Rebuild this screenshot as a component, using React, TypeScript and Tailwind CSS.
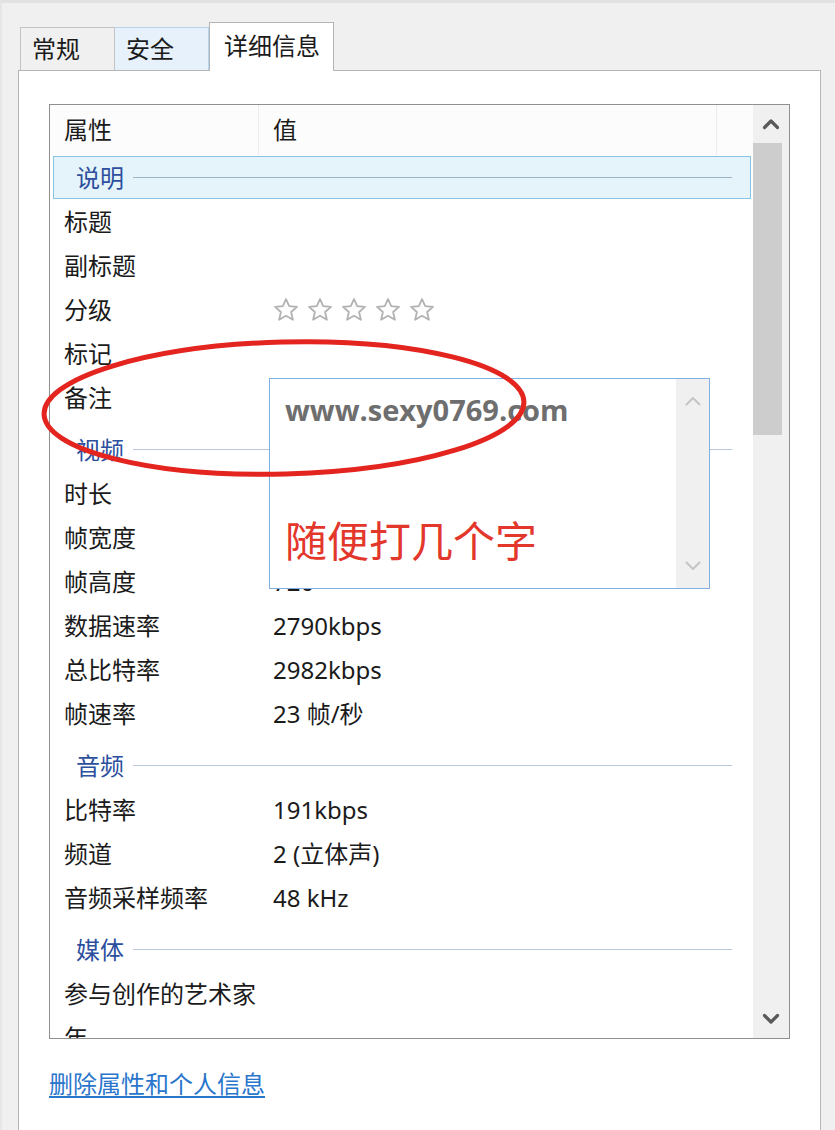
import React from "react";

type Row =
  | { kind: "group"; label: string; selected?: boolean; first?: boolean }
  | { kind: "prop"; name: string; value?: string; stars?: boolean };

const rows: Row[] = [
  { kind: "group", label: "说明", selected: true, first: true },
  { kind: "prop", name: "标题" },
  { kind: "prop", name: "副标题" },
  { kind: "prop", name: "分级", stars: true },
  { kind: "prop", name: "标记" },
  { kind: "prop", name: "备注" },
  { kind: "group", label: "视频" },
  { kind: "prop", name: "时长" },
  { kind: "prop", name: "帧宽度" },
  { kind: "prop", name: "帧高度", value: "720" },
  { kind: "prop", name: "数据速率", value: "2790kbps" },
  { kind: "prop", name: "总比特率", value: "2982kbps" },
  { kind: "prop", name: "帧速率", value: "23 帧/秒" },
  { kind: "group", label: "音频" },
  { kind: "prop", name: "比特率", value: "191kbps" },
  { kind: "prop", name: "频道", value: "2 (立体声)" },
  { kind: "prop", name: "音频采样频率", value: "48 kHz" },
  { kind: "group", label: "媒体" },
  { kind: "prop", name: "参与创作的艺术家" },
  { kind: "prop", name: "年" },
];

const Star = () => (
  <svg width="26" height="26" viewBox="0 0 26 26">
    <path
      d="M13 2 L16.2 9.1 L24 9.9 L18.1 15 L19.9 22.8 L13 18.8 L6.1 22.8 L7.9 15 L2 9.9 L9.8 9.1 Z"
      fill="#fdfdfd"
      stroke="#b2b2b2"
      strokeWidth="1.8"
      strokeLinejoin="round"
    />
  </svg>
);

const Chevron = ({ up, color, w = 3 }: { up?: boolean; color: string; w?: number }) => (
  <svg width="18" height="12" viewBox="0 0 18 12">
    <path
      d={up ? "M2.5 9.5 L9 3 L15.5 9.5" : "M2.5 2.5 L9 9 L15.5 2.5"}
      fill="none"
      stroke={color}
      strokeWidth={w}
      strokeLinecap="round"
      strokeLinejoin="round"
    />
  </svg>
);

const GroupRow = ({ label, selected, first }: { label: string; selected?: boolean; first?: boolean }) => (
  <div className={"shrink-0 " + (first ? "h-[45px] pt-[1px]" : "h-[52px] pt-[8px]")}>
    <div
      className={
        "ml-[3px] mr-[2px] h-[43px] border flex items-center pl-[22px] pr-[18px] " +
        (selected ? "border-[#86c6e4] bg-[#e5f3fb]" : "border-transparent")
      }
    >
      <span className="text-[#2c4f9e]">{label}</span>
      <div className={"flex-1 h-px ml-[9px] " + (selected ? "bg-[#9db3c6]" : "bg-[#b9c7dc]")} />
    </div>
  </div>
);

const PropRow = ({ name, value, stars }: { name: string; value?: string; stars?: boolean }) => (
  <div className="shrink-0 h-[44px] flex items-center">
    <div className="w-[209px] pl-[14px] whitespace-nowrap">{name}</div>
    <div className="pl-[14px] whitespace-nowrap flex items-center gap-[8px]">
      {stars ? (
        <>
          <Star />
          <Star />
          <Star />
          <Star />
          <Star />
        </>
      ) : (
        value
      )}
    </div>
  </div>
);

export default function App() {
  return (
    <div className="relative w-[835px] h-[1130px] overflow-hidden bg-[#f0f0f0] border-t-[3px] border-t-[#e2e2e2] border-l-[2px] border-l-[#e6e6e6] font-['Noto_Sans','Noto_Sans_CJK_SC',sans-serif] text-[24px] leading-none text-[#1b1b1b]">
      {/* tabs */}
      <div className="pt-[19px] pl-[18px] flex items-end h-[67px]">
        <div className="w-[95px] h-[43px] border border-b-0 border-[#c4c4c4] bg-[#f0f0f0] flex items-center pl-[11px]">
          常规
        </div>
        <div className="w-[94px] h-[43px] border border-l-0 border-b-0 border-[#b4d3ee] bg-[#e6f1fb] flex items-center pl-[11px]">
          安全
        </div>
        <div className="relative z-10 w-[125px] h-[49px] -mb-[1px] border border-b-0 border-[#b5b5b5] bg-white flex items-center pl-[14px] pb-[2px]">
          详细信息
        </div>
      </div>

      {/* tab page */}
      <div className="ml-[16px] w-[803px] h-[1100px] border border-[#b5b5b5] bg-white pt-[33px] pl-[30px]">
        <div className="w-[741px] h-[935px] border border-[#8f8f8f] flex overflow-hidden bg-white">
          <div className="w-[703px] flex flex-col">
            <div className="h-[50px] flex items-center shrink-0 bg-[#fcfcfc]">
              <div className="w-[209px] h-full pl-[14px] flex items-center border-r border-[#ececec]">属性</div>
              <div className="w-[458px] h-full pl-[14px] flex items-center border-r border-[#ececec]">值</div>
              <div className="flex-1" />
            </div>
            {rows.map((r, i) =>
              r.kind === "group" ? (
                <GroupRow key={i} label={r.label} selected={r.selected} first={r.first} />
              ) : (
                <PropRow key={i} name={r.name} value={r.value} stars={r.stars} />
              )
            )}
          </div>
          {/* scrollbar */}
          <div className="flex-1 bg-[#f0f0f0] flex flex-col">
            <div className="h-[38px] shrink-0 flex items-center justify-center">
              <Chevron up color="#5a5a5a" w={3.2} />
            </div>
            <div className="w-[29px] h-[292px] shrink-0 bg-[#cdcdcd]" />
            <div className="flex-1" />
            <div className="h-[38px] shrink-0 flex items-center justify-center">
              <Chevron color="#5a5a5a" w={3.2} />
            </div>
          </div>
        </div>

        <div className="mt-[33px] text-[#2a76cc] underline underline-offset-[3px] w-fit">删除属性和个人信息</div>
      </div>

      {/* inline editor over the list */}
      <div className="absolute left-[267px] top-[375px] w-[441px] h-[211px] border-[1.5px] border-[#7fb0e0] bg-white flex">
        <div className="flex-1 pl-[15px] pt-[13px]">
          <div className="text-[29px] leading-[36px] font-bold text-[#6e6e6e] font-['Open_Sans',sans-serif]">
            www.sexy0769.com
          </div>
          <div className="mt-[86px] text-[42px] leading-[50px] text-[#e3372c] font-['Noto_Sans_CJK_SC',sans-serif]">
            随便打几个字
          </div>
        </div>
        <div className="w-[33px] bg-[#f0f0f0] flex flex-col justify-between py-[16px] items-center">
          <Chevron up color="#c5c5c5" w={2} />
          <Chevron color="#c5c5c5" w={2} />
        </div>
      </div>

      {/* red annotation ring */}
      <svg className="absolute left-0 top-0 pointer-events-none" width="835" height="1130">
        <ellipse
          cx="282"
          cy="405"
          rx="240"
          ry="66"
          transform="rotate(-1.5 282 405)"
          fill="none"
          stroke="#e3241f"
          strokeWidth="5"
        />
      </svg>
    </div>
  );
}
